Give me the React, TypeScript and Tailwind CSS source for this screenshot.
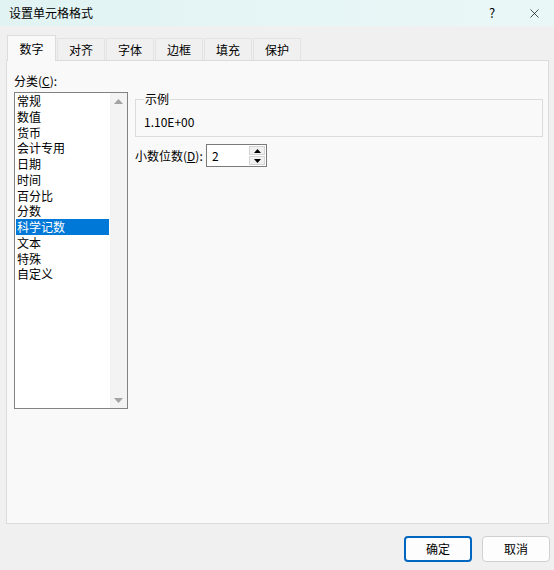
import { X } from 'lucide-react';

const categories = ['常规', '数值', '货币', '会计专用', '日期', '时间', '百分比', '分数', '科学记数', '文本', '特殊', '自定义'];
const tabs = ['数字', '对齐', '字体', '边框', '填充', '保护'];

const font = "font-['Segoe_UI','Noto_Sans_CJK_SC',sans-serif]";

export default function App() {
  const selected = '科学记数';

  return (
    <div className={`w-[554px] h-[570px] bg-[#f0f0f0] flex flex-col text-[12px] text-black ${font}`}>
      {/* Title bar */}
      <div className="h-[26px] shrink-0 flex items-center bg-gradient-to-r from-[#e1f3f3] to-[#eaf7f7] pl-[9px]">
        <span className="flex-1 leading-[16px]">设置单元格格式</span>
        <span className="w-[14px] text-center text-[13px] mr-[28px]">?</span>
        <X className="w-[15px] h-[15px] mr-[12px]" strokeWidth={1.1} />
      </div>

      {/* Tabs */}
      <div className="h-[34px] shrink-0 flex items-end pl-[7px]">
        {tabs.map((t, i) =>
          i === 0 ? (
            <div
              key={t}
              className="relative z-10 w-[49px] h-[26px] -mb-px bg-[#f9f9f9] border border-b-0 border-[#dcdcdc] flex items-center justify-center"
            >
              {t}
            </div>
          ) : (
            <div
              key={t}
              className="w-[48px] h-[22px] ml-px bg-[#f0f0f0] border border-b-0 border-[#e3e3e3] flex items-center justify-center"
            >
              {t}
            </div>
          )
        )}
      </div>

      {/* Panel */}
      <div className="mx-[6px] w-[543px] h-[464px] shrink-0 bg-[#f9f9f9] border border-[#dcdcdc] flex pt-[12px] pl-[7px] pr-[5px]">
        {/* Category list */}
        <div className="w-[114px] flex flex-col">
          <div className="h-[16px] leading-[16px] mb-[3px]">
            分类(<span className="underline">C</span>):
          </div>
          <div className="h-[317px] bg-white border border-[#828282] flex">
            <div className="flex-1 px-px">
              {categories.map((c) => (
                <div
                  key={c}
                  className={`h-[15.75px] leading-[15.75px] pl-px ${c === selected ? 'bg-[#0078d7] text-white' : ''}`}
                >
                  {c}
                </div>
              ))}
            </div>
            <div className="w-[17px] bg-[#f3f3f3] flex flex-col items-center justify-between pt-[6px] pb-[5px]">
              <svg width="9" height="5" viewBox="0 0 9 5">
                <path d="M4.5 0L9 5H0z" fill="#a3a3a3" />
              </svg>
              <svg width="9" height="5" viewBox="0 0 9 5">
                <path d="M0 0H9L4.5 5z" fill="#a3a3a3" />
              </svg>
            </div>
          </div>
        </div>

        {/* Right side */}
        <div className="flex-1 ml-[7px] flex flex-col">
          <fieldset className="mt-[18px] border border-[#dcdcdc] px-[8px] pt-[7px] pb-[6px]">
            <legend className="px-px leading-[16px]">示例</legend>
            <div className="leading-[16px]">1.10E+00</div>
          </fieldset>

          <div className="mt-[7px] flex items-center">
            <span className="w-[71px] leading-[16px]">
              小数位数(<span className="underline">D</span>):
            </span>
            <div className="w-[61px] h-[23px] bg-white border border-[#7a7a7a] flex">
              <span className="flex-1 pl-[5px] leading-[21px]">2</span>
              <div className="w-[16px] my-px mr-px flex flex-col gap-px">
                <div className="flex-1 bg-[#f0f0f0] border border-[#d4d4d4] flex items-center justify-center">
                  <svg width="7" height="4" viewBox="0 0 7 4">
                    <path d="M3.5 0L7 4H0z" fill="#000" />
                  </svg>
                </div>
                <div className="flex-1 bg-[#f0f0f0] border border-[#d4d4d4] flex items-center justify-center">
                  <svg width="7" height="4" viewBox="0 0 7 4">
                    <path d="M0 0H7L3.5 4z" fill="#000" />
                  </svg>
                </div>
              </div>
            </div>
          </div>
        </div>
      </div>

      {/* Buttons */}
      <div className="flex justify-end gap-[10px] pr-[4px] mt-[12px]">
        <button className="w-[68px] h-[26px] rounded-[4px] bg-[#fdfdfd] border-2 border-[#0067c0] leading-[16px]">
          确定
        </button>
        <button className="w-[68px] h-[26px] rounded-[4px] bg-[#fdfdfd] border border-[#d0d0d0] leading-[16px]">
          取消
        </button>
      </div>
    </div>
  );
}
